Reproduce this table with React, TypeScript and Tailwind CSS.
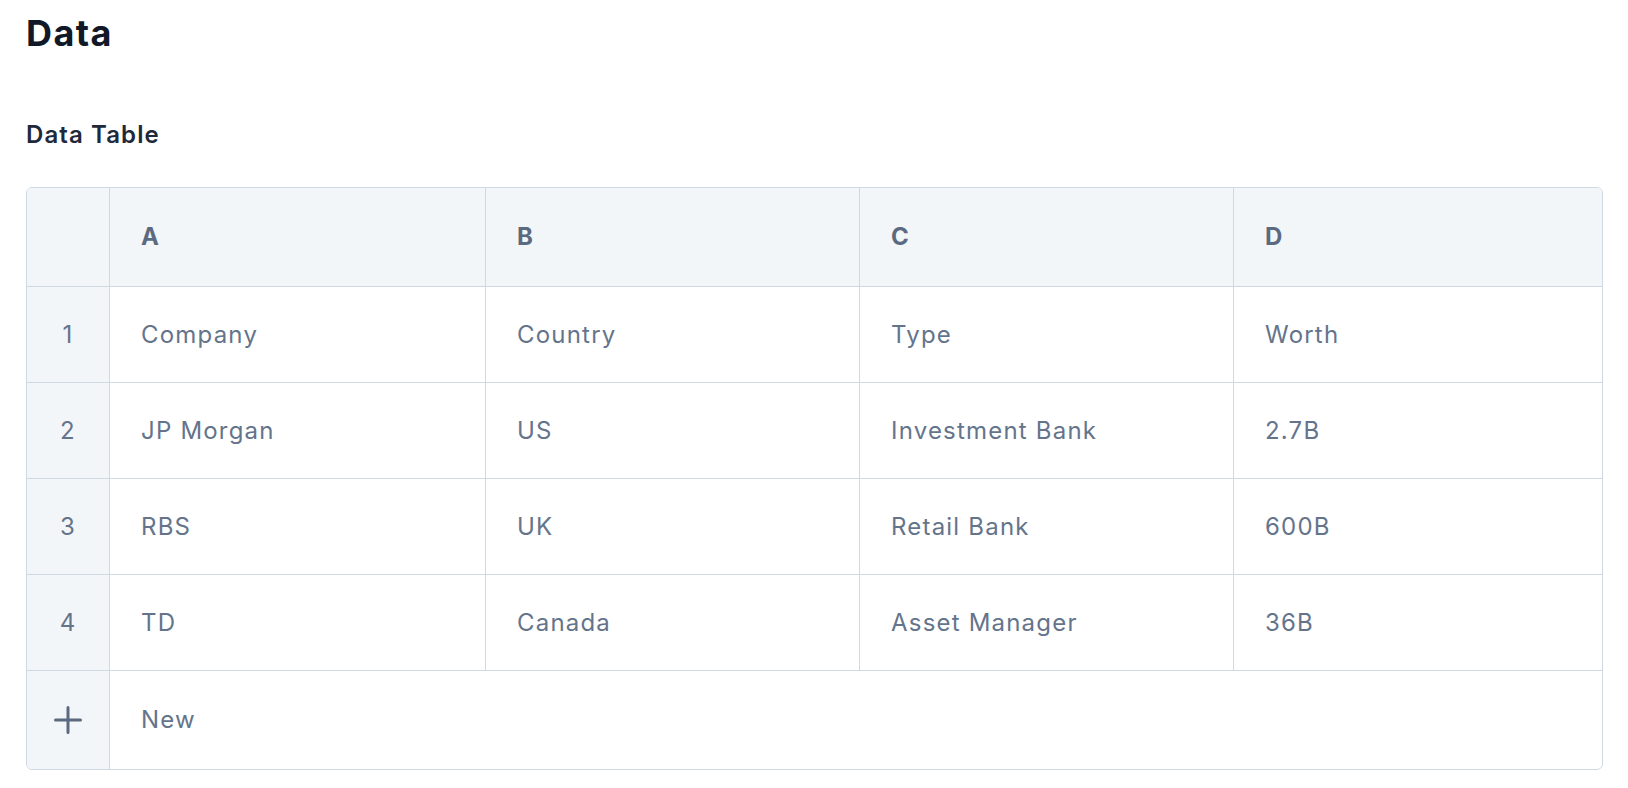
import { Fragment } from "react";

const columns = ["A", "B", "C", "D"];

const rows = [
  ["Company", "Country", "Type", "Worth"],
  ["JP Morgan", "US", "Investment Bank", "2.7B"],
  ["RBS", "UK", "Retail Bank", "600B"],
  ["TD", "Canada", "Asset Manager", "36B"],
];

function PlusIcon() {
  return (
    <svg width="30" height="30" viewBox="0 0 30 30" fill="none">
      <path
        d="M2.5 15h25M15 2.5v25"
        stroke="#5b6a7f"
        strokeWidth="3"
        strokeLinecap="round"
      />
    </svg>
  );
}

export default function App() {
  return (
    <div className="min-h-screen bg-white pl-[26px] pr-[25px] pt-[11px] font-['Inter','Liberation_Sans',sans-serif]">
      <h1 className="text-[36px] leading-[44px] font-bold text-[#111827] tracking-[1.4px]">
        Data
      </h1>
      <h2 className="mt-[66px] text-[24px] leading-[28px] font-semibold text-[#1e293b] tracking-[1.1px]">
        Data Table
      </h2>
      <div className="mt-[38px] border border-[#cfd9e3] rounded-md overflow-hidden">
        <div className="grid grid-cols-[83px_376px_374px_374px_1fr] text-[24px] tracking-[1.2px] text-[#64748b]">
          {/* header */}
          <div className="h-[99px] bg-[#f3f6f9] border-r border-b border-[#cfd9e3]" />
          {columns.map((c, i) => (
            <div
              key={c}
              className={
                i < 3
                  ? "h-[99px] bg-[#f3f6f9] border-r border-b border-[#cfd9e3] flex items-center pl-[31px] font-bold text-[#5b6a80]"
                  : "h-[99px] bg-[#f3f6f9] border-b border-[#cfd9e3] flex items-center pl-[31px] font-bold text-[#5b6a80]"
              }
            >
              {c}
            </div>
          ))}

          {rows.map((row, r) => (
            <Fragment key={r}>
              <div className="h-[96px] bg-[#f3f6f9] border-r border-b border-[#cfd9e3] flex items-center justify-center">
                {r + 1}
              </div>
              {row.map((cell, i) => (
                <div
                  key={i}
                  className={
                    i < 3
                      ? "h-[96px] border-r border-b border-[#cfd9e3] flex items-center pl-[31px]"
                      : "h-[96px] border-b border-[#cfd9e3] flex items-center pl-[31px]"
                  }
                >
                  {cell}
                </div>
              ))}
            </Fragment>
          ))}

          {/* new row */}
          <div className="h-[98px] bg-[#f3f6f9] border-r border-[#cfd9e3] flex items-center justify-center">
            <PlusIcon />
          </div>
          <div className="col-span-4 h-[98px] flex items-center pl-[31px]">New</div>
        </div>
      </div>
    </div>
  );
}
